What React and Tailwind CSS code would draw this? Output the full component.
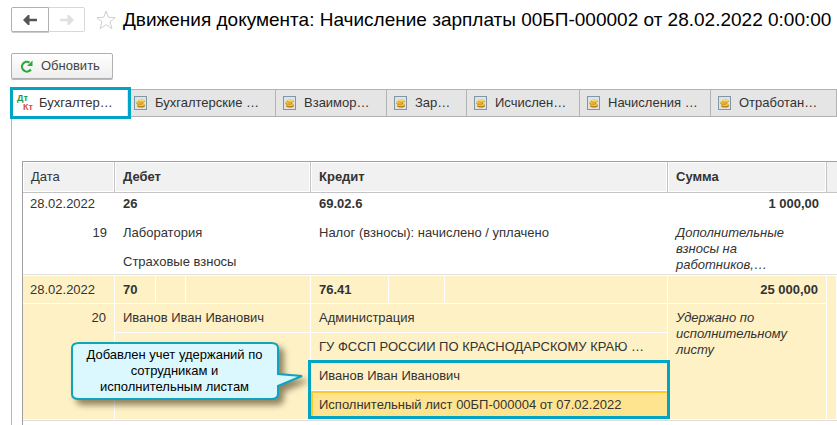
import React from 'react';

const TABS = [
  { label: 'Бухгалтерские …', width: 'w-[149px]' },
  { label: 'Взаимор…', width: 'w-[111px]' },
  { label: 'Зар…', width: 'w-[80px]' },
  { label: 'Исчислен…', width: 'w-[113px]' },
  { label: 'Начисления …', width: 'w-[131px]' },
  { label: 'Отработан…', width: 'min-w-[125px] flex-1' },
];

function ArrowIcon({ className }) {
  return (
    <svg width="14" height="10" viewBox="0 0 14 10" fill="currentColor" className={className} aria-hidden="true">
      <path d="M0 5 5 0h1.500v3.800H14v2.400H6.500V10H5z" />
    </svg>
  );
}

function StarIcon() {
  return (
    <svg width="20" height="20" viewBox="0 0 20 20" fill="#fff" stroke="#cfcfcf" aria-hidden="true">
      <path d="m10 1.200 2.400 6.100 6.800.3-5.200 4.300 2 6.700L10 14.700l-6 3.900 2-6.700L.8 7.600l6.800-.3z" />
    </svg>
  );
}

function RefreshIcon() {
  return (
    <svg width="13" height="13" viewBox="0 0 13 13" fill="none" aria-hidden="true">
      <path d="M9.500 2.500A4.900 4.900 0 1 0 10.900 9.500" stroke="#2fa83a" strokeWidth="2.200" />
      <path d="M12.500 .5v5.500H7z" fill="#2fa83a" />
    </svg>
  );
}

function RegisterIcon() {
  return (
    <svg width="13" height="14" viewBox="0 0 13 14" className="shrink-0" aria-hidden="true">
      <rect x=".5" y=".5" width="12" height="13" fill="#dfe3e4" stroke="#7f96a6" />
      <ellipse cx="7" cy="9.500" rx="4" ry="2" fill="#b57a12" />
      <ellipse cx="6.800" cy="8.600" rx="4" ry="1.700" fill="#f3c63a" />
      <ellipse cx="5.800" cy="7" rx="3.500" ry="1.600" fill="#b57a12" />
      <ellipse cx="5.600" cy="6.400" rx="3.400" ry="1.400" fill="#f0c548" />
      <ellipse cx="7.400" cy="5" rx="3.400" ry="1.500" fill="#c8901c" />
      <ellipse cx="7.400" cy="4.500" rx="3.200" ry="1.200" fill="#f6d870" />
    </svg>
  );
}

function DebitCreditIcon() {
  return (
    <span className="flex w-4 shrink-0 flex-col text-left text-[9px] leading-[9px] font-bold" aria-hidden="true">
      <span className="text-[#1b9650]">Дт</span>
      <span className="self-end text-[#dc4a4a]">Кт</span>
    </span>
  );
}

function Callout() {
  return (
    <div className="absolute top-[9px] -left-[44px] z-10 h-[66px] w-[240px]">
      <svg width="240" height="66" viewBox="0 0 240 66" className="absolute inset-0 drop-shadow-[5px_5px_3px_rgba(70,60,30,0.6)]" aria-hidden="true">
        <path
          d="M8 1H200Q207 1 207 6V32L231 34 207 44V52Q207 57 200 57H8Q1 57 1 52V6Q1 1 8 1Z"
          fill="#dbf8ff"
          stroke="#0fa3c0"
          strokeWidth="2"
        />
      </svg>
      <p className="relative w-[207px] px-3 pt-[5px] text-center leading-4 text-black">
        Добавлен учет удержаний по сотрудникам и исполнительным листам
      </p>
    </div>
  );
}

function HeaderCell({ children, bold = true, colSpan }) {
  return (
    <th
      colSpan={colSpan}
      className={`h-[32px] border-t border-r border-b border-[#c4c4c4] border-t-[#a0a0a0] bg-[#f1f1f1] px-2 text-left shadow-[inset_0_0_0_1px_#fff] ${bold ? 'font-bold' : 'font-normal'}`}
    >
      {children}
    </th>
  );
}

function EntriesTable() {
  const cell = 'border-r border-b border-white bg-[#fef1c6] px-2';

  return (
    <table className="w-full table-fixed border-separate border-spacing-0 border-l border-[#a0a0a0]">
      <colgroup>
        <col className="w-[92px]" />
        <col className="w-[41px]" />
        <col className="w-[30px]" />
        <col className="w-[125px]" />
        <col className="w-[78px]" />
        <col className="w-[56px]" />
        <col />
        <col className="w-[159px]" />
        <col className="w-[10px]" />
      </colgroup>
      <thead>
        <tr>
          <HeaderCell bold={false}>Дата</HeaderCell>
          <HeaderCell colSpan={3}>Дебет</HeaderCell>
          <HeaderCell colSpan={3}>Кредит</HeaderCell>
          <HeaderCell>Сумма</HeaderCell>
          <td className="border-t border-b border-[#c4c4c4] border-t-[#a0a0a0] bg-[#f1f1f1]" />
        </tr>
      </thead>
      <tbody className="align-top">
        <tr className="h-[25px] leading-[21px]">
          <td className="px-[7px]">28.02.2022</td>
          <td colSpan={3} className="px-2 font-bold">26</td>
          <td colSpan={3} className="px-2 font-bold">69.02.6</td>
          <td className="px-2 text-right font-bold">1 000,00</td>
          <td />
        </tr>
        <tr className="h-[29px]">
          <td className="border-b border-[#e2e2e2] px-2 pt-[7px] text-right leading-4" rowSpan={2}>19</td>
          <td colSpan={3} className="px-2 pt-[7px] leading-4">Лаборатория</td>
          <td colSpan={3} className="px-2 pt-[7px] leading-4">Налог (взносы): начислено / уплачено</td>
          <td className="border-b border-[#e2e2e2] px-2 pt-[7px] leading-4 italic" rowSpan={2}>
            Дополнительные взносы на работников,…
          </td>
          <td rowSpan={2} className="border-b border-[#e2e2e2]" />
        </tr>
        <tr className="h-[28px]">
          <td colSpan={3} className="border-b border-[#e2e2e2] px-2 pt-[7px] leading-4">Страховые взносы</td>
          <td colSpan={3} className="border-b border-[#e2e2e2]" />
        </tr>

        <tr className="h-[29px] leading-[27px]">
          <td className={`${cell} border-t pl-[7px]`}>28.02.2022</td>
          <td className={`${cell} border-t font-bold`}>70</td>
          <td className={`${cell} border-t`} />
          <td className={`${cell} border-t`} />
          <td className={`${cell} border-t font-bold`}>76.41</td>
          <td className={`${cell} border-t`} />
          <td className={`${cell} border-t`} />
          <td className={`${cell} border-t text-right font-bold`}>25 000,00</td>
          <td rowSpan={4} className={`${cell} border-t`} />
        </tr>
        <tr className="h-[29px] leading-[28px]">
          <td rowSpan={3} className={`${cell} text-right`}>20</td>
          <td colSpan={3} className={cell}>Иванов Иван Иванович</td>
          <td colSpan={3} className={cell}>Администрация</td>
          <td rowSpan={3} className={`${cell} pt-[6px] leading-4 italic`}>
            Удержано по исполнительному листу
          </td>
        </tr>
        <tr className="h-[29px] leading-[28px]">
          <td colSpan={3} rowSpan={2} className={`${cell} relative`}>
            <Callout />
          </td>
          <td colSpan={3} className={`${cell} truncate`}>ГУ ФССП РОССИИ ПО КРАСНОДАРСКОМУ КРАЮ …</td>
        </tr>
        <tr className="leading-[28px]">
          <td colSpan={3} className="relative border-r border-b border-white bg-[#fef1c6]">
            <div className="border-b border-white px-2">Иванов Иван Иванович</div>
            <div className="border-2 border-r-0 border-[#ffca28] bg-[#ffe48f] px-[6px] leading-[24px]">
              Исполнительный лист 00БП-000004 от 07.02.2022
            </div>
            <div className="pointer-events-none absolute -inset-x-[3px] -top-[2px] bottom-0 border-3 border-[#00a5c6]" />
          </td>
        </tr>
        <tr className="h-[10px]">
          <td colSpan={9} className="border-t border-[#dedede]" />
        </tr>
      </tbody>
    </table>
  );
}

export default function App() {
  return (
    <div className="min-h-screen overflow-hidden bg-white font-['Liberation_Sans',Arial,sans-serif] text-[13px] text-[#333]">
      <header className="flex items-center pt-[7px] pl-[11px]">
        <div className="flex h-[25px]">
          <button
            type="button"
            aria-label="Назад"
            className="flex w-[38px] items-center justify-center rounded-l-xs border border-[#b0b0b0] text-[#555] shadow-[0_1px_0_#ccc]"
          >
            <ArrowIcon />
          </button>
          <button
            type="button"
            aria-label="Вперед"
            disabled
            className="flex w-[36px] items-center justify-center rounded-r-xs border border-l-0 border-[#d8d8d8] text-[#e0e0e0]"
          >
            <ArrowIcon className="rotate-180" />
          </button>
        </div>
        <button type="button" aria-label="Избранное" className="ml-[11px]">
          <StarIcon />
        </button>
        <h1 className="ml-[7px] text-[19px] leading-6 whitespace-nowrap text-black">
          Движения документа: Начисление зарплаты 00БП-000002 от 28.02.2022 0:00:00
        </h1>
      </header>

      <div className="pt-[21px] pl-[11px]">
        <button
          type="button"
          className="flex h-[26px] items-center gap-2 rounded-xs border border-[#b0b0b0] bg-gradient-to-b from-white to-[#eee] pr-3 pl-2 text-[#444] shadow-[0_1px_0_#bbb]"
        >
          <RefreshIcon />
          Обновить
        </button>
      </div>

      <nav role="tablist" className="mt-[10px] ml-[11px] flex h-[28px]">
        <button type="button" role="tab" aria-selected="true" className="relative flex w-[116px] shrink-0 items-center gap-[6px] pl-[6px] whitespace-nowrap">
          <DebitCreditIcon />
          Бухгалтер…
          <span className="absolute -top-[2px] -right-[4px] -bottom-[2px] -left-px border-3 border-[#00a5c6]" />
        </button>
        {TABS.map((tab) => (
          <button
            key={tab.label}
            type="button"
            role="tab"
            aria-selected="false"
            className={`${tab.width} flex shrink-0 items-center gap-2 border-y border-r border-[#b3b3b3] bg-[#e5e5e5] pl-[7px] whitespace-nowrap`}
          >
            <RegisterIcon />
            {tab.label}
          </button>
        ))}
      </nav>

      <main className="ml-[11px] border-l border-[#b8b8b8] pt-[44px] pl-[10px]">
        <EntriesTable />
      </main>
    </div>
  );
}
